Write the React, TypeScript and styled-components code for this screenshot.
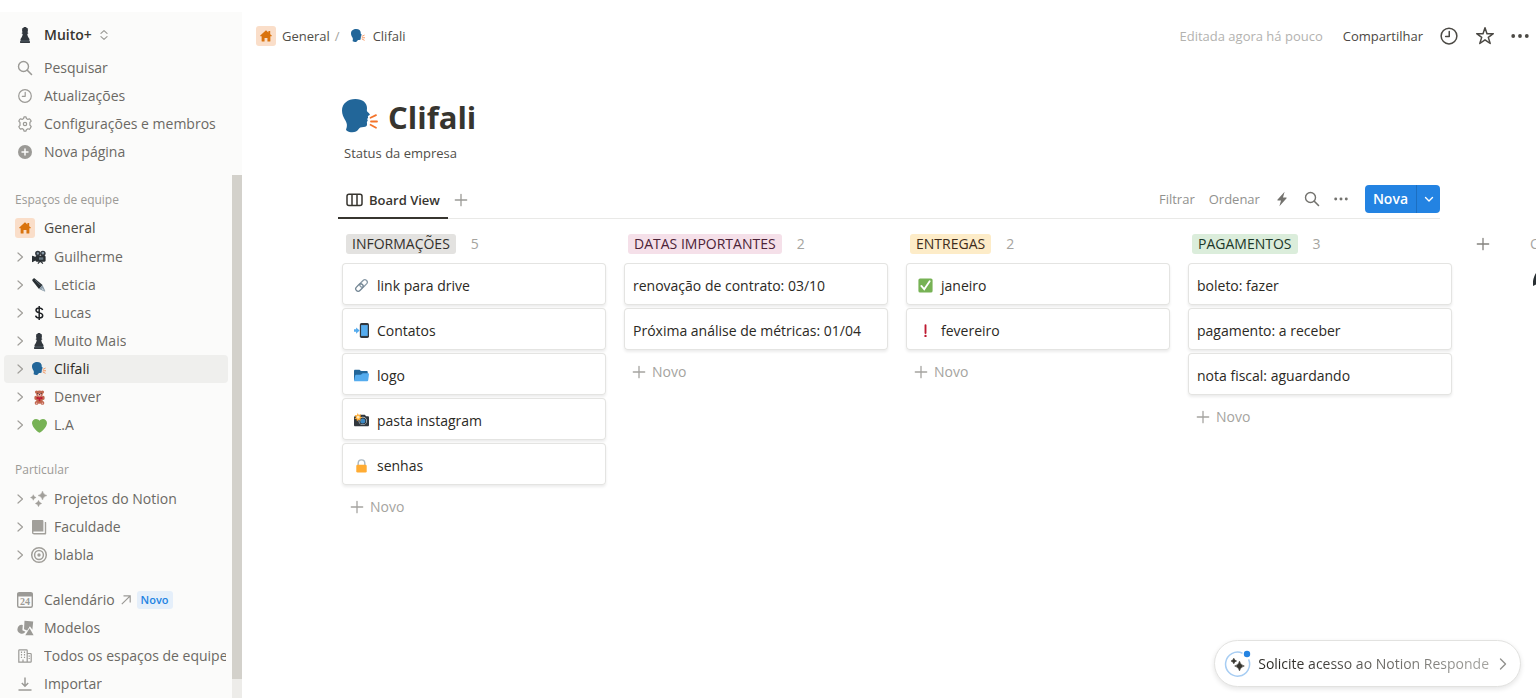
import React from "react";
import styled, { createGlobalStyle, css } from "styled-components";

const GlobalStyle = createGlobalStyle`
  *, *::before, *::after { box-sizing: border-box; }
  body {
    margin: 0;
    background: #ffffff;
    color: #37352f;
    font-family: "Open Sans", "Noto Sans", "Segoe UI", sans-serif;
    font-size: 14px;
    line-height: 20px;
  }
  h1, p, ul, h2 { margin: 0; padding: 0; font-weight: inherit; font-size: inherit; }
  ul { list-style: none; }
  a { color: inherit; text-decoration: none; }
  button { border: 0; padding: 0; margin: 0; background: none; font: inherit; color: inherit; cursor: pointer; }
  svg { display: block; flex: none; }
`;

/* ---------- emoji ---------- */

type IconProps = { size?: number };

const SpeakingHead = ({ size = 14 }: IconProps) => (
  <svg width={size} height={size} viewBox="0 1.5 36 36" aria-hidden="true">
    <path
      fill="#226699"
      d="M13.400 1.500C20.600 1.500 25 5.400 25 10.600c0 1.600-.4 2.400.2 3.400.7 1.100 2.700 2.200 2.700 3.100 0 .8-1.500 1-1.900 1.400-.4.500.2 1.200.1 1.800-.1.500-.9.800-.9 1.200 0 .5.600.9.500 1.500-.1.700-.7.900-.8 1.600-.1 1.200.6 2.600-.4 3.900-1.200 1.500-4.500.9-6.200 1.400-1.500.5-1.900 3-4.300 4.200-2.500 1.200-6.500 1-9.200-.9-1.300-1-.6-1.700-.2-3 .7-2.400.3-4.400-.9-6.700C1.400 19.400 0 16.800 0 13 0 6 5.800 1.500 13.400 1.500z"
    />
    <path d="M28.500 20.200l5.500-2.600M29 24h6M28.500 27.300l5.500 2.900" stroke="#F4742B" strokeWidth="1.800" strokeLinecap="round" fill="none" />
  </svg>
);

const Pawn = () => (
  <svg width="16" height="16" viewBox="0 0 36 36" aria-hidden="true">
    <path
      fill="#31373D"
      d="M14 2.500C14 1 16 0 18 0s4 1 4 2.500l2.500.9c.8.400.8 1.600 0 2l-.7.500c.8 1.200 1.100 2.500.6 3.900l-1 1.900 1.600 1c.8.800.5 2-.6 2.300l-1.300.4c.3 4 1.400 6.800 3.400 9.300 1 1.200 1.700 2.100 1.700 3.500 0 1-.5 1.600-.9 2 1.200.7 1.700 1.700 1.700 3V36H7v-2.800c0-1.300.5-2.300 1.700-3-.4-.4-.9-1-.9-2 0-1.400.7-2.300 1.700-3.500 2-2.500 3.100-5.300 3.400-9.300l-1.300-.4c-1.100-.3-1.400-1.500-.6-2.300l1.600-1-1-1.900c-.5-1.400-.2-2.700.6-3.900l-.7-.5c-.8-.4-.8-1.600 0-2z"
    />
    <path d="M8 31.500h20" stroke="#66757F" strokeWidth="1.500" />
  </svg>
);

const House = () => (
  <svg width="12" height="12" viewBox="0 0 14 14" aria-hidden="true">
    <path fill="#D9730D" d="M7 .4L.3 6.500c-.3.400 0 .9.400.9h1.200v5.300c0 .4.300.7.600.7h2.800V9.300h3.400v4.100h2.800c.3 0 .6-.3.600-.7V7.400h1.200c.4 0 .7-.5.400-.9L11.900 4.900V1.200H9.800V3z" />
  </svg>
);

const MovieCamera = () => (
  <svg width="14" height="14" viewBox="0 0 36 36" aria-hidden="true">
    <circle cx="15" cy="9" r="7" fill="#31373D" />
    <circle cx="28" cy="9" r="7" fill="#31373D" />
    <circle cx="15" cy="9" r="3" fill="#8899A6" />
    <circle cx="28" cy="8" r="3.500" fill="#8899A6" />
    <path fill="#292F33" d="M12 15h20c2 0 3 1 3 3v9c0 2-1 3-3 3H12c-2 0-3-1-3-3l-7 4c-1 .6-2 0-2-1V16c0-1 1-1.600 2-1l7 3c0-2 1-3 3-3z" />
    <path fill="#66757F" d="M18 19h11v6H18z" />
    <path d="M15 35l5-5h3l5 5" fill="none" stroke="#292F33" strokeWidth="3" />
  </svg>
);

const Pen = () => (
  <svg width="14" height="14" viewBox="0 0 36 36" aria-hidden="true">
    <path fill="#292F33" d="M1 7c-1-3 3-7 6-6l20 17-9 10z" />
    <path d="M8 5l14 14" stroke="#66757F" strokeWidth="2" />
    <path fill="#8899A6" d="M27 18l7 15c.6 1.400-.5 2-1.500 1.500L18 28z" />
    <path fill="#CCD6DD" d="M26 26l8 9-10-7z" />
  </svg>
);

const Dollar = () => (
  <svg width="16" height="16" viewBox="0 0 16 16" aria-hidden="true">
    <path d="M8.200 1v14M11.600 5C11.200 3.600 10 3 8.200 3 6.200 3 5 4 5 5.300c0 3.400 6.700 1.800 6.700 5.200 0 1.500-1.400 2.500-3.400 2.500-2 0-3.400-.8-3.700-2.400" fill="none" stroke="#1f2225" strokeWidth="1.500" />
  </svg>
);

const Bear = () => (
  <svg width="15" height="15" viewBox="0 0 36 36" aria-hidden="true">
    <g fill="#C1694F">
      <circle cx="11" cy="5" r="4" />
      <circle cx="25" cy="5" r="4" />
      <ellipse cx="18" cy="9" rx="8" ry="8" />
      <ellipse cx="18" cy="23" rx="8" ry="10" />
      <ellipse cx="9" cy="19" rx="3.500" ry="5" />
      <ellipse cx="27" cy="19" rx="3.500" ry="5" />
      <ellipse cx="11" cy="31" rx="4.500" ry="4.500" />
      <ellipse cx="25" cy="31" rx="4.500" ry="4.500" />
    </g>
    <ellipse cx="18" cy="12" rx="4.500" ry="3.500" fill="#E6AAAA" />
    <circle cx="14" cy="8" r="1.300" fill="#292F33" />
    <circle cx="22" cy="8" r="1.300" fill="#292F33" />
    <circle cx="18" cy="11" r="1.500" fill="#292F33" />
    <path fill="#BE1931" d="M11 16l7 2 7-2v6l-5-1v6h-4v-6l-5 1z" />
    <circle cx="11" cy="32" r="2" fill="#E6AAAA" />
    <circle cx="25" cy="32" r="2" fill="#E6AAAA" />
  </svg>
);

const Heart = () => (
  <svg width="15" height="15" viewBox="0 0 36 36" aria-hidden="true">
    <path fill="#77B255" d="M36 11.800c0-5.300-4.300-9.700-9.700-9.700-3.400 0-6.500 1.800-8.300 4.600-1.700-2.800-4.800-4.600-8.300-4.600C4.300 2.100 0 6.500 0 11.800c0 .8.100 1.500.3 2.200C1.800 23.400 12.200 33.200 18 35.300c5.800-2.100 16.200-11.900 17.700-21.300.2-.7.300-1.400.3-2.200z" />
  </svg>
);

const Link = () => (
  <svg width="15" height="15" viewBox="0 0 16 16" fill="none" aria-hidden="true">
    <g transform="rotate(-45 8 8)" strokeWidth="1.400">
      <rect x="6.600" y="5.400" width="9" height="5.200" rx="2.600" stroke="#8899A6" />
      <rect x=".4" y="5.400" width="9" height="5.200" rx="2.600" stroke="#738694" />
    </g>
  </svg>
);

const Phone = () => (
  <svg width="15" height="15" viewBox="0 0 36 36" aria-hidden="true">
    <rect x="14" y="0" width="22" height="36" rx="4" fill="#31373D" />
    <rect x="17" y="5" width="16" height="26" fill="#55ACEE" />
    <path fill="#55ACEE" d="M0 15h5v-4.500l8.500 7.500L5 25.500V21H0z" />
  </svg>
);

const Folder = () => (
  <svg width="15" height="15" viewBox="0 0 36 36" aria-hidden="true">
    <path fill="#269" d="M0 29V7c0-2 1-3 3-3h10c2 0 2 3 5 3h12c2 0 3 1 3 3v19z" />
    <path fill="#55ACEE" d="M36 15c0-1.500-1-2.500-2.500-2.500H22c-4 0-3 3.500-6.500 3.500H6c-2 0-3 1-3.300 2.500L0 31c0 .6.500 1 1.500 1h30c1.500 0 2.400-1 2.600-2.500z" />
  </svg>
);

const Camera = () => (
  <svg width="15" height="15" viewBox="0 0 36 36" aria-hidden="true">
    <path fill="#31373D" d="M3 8h8l3-4h12l3 4h4c2 0 3 1 3 3v18c0 2-1 3-3 3H3c-2 0-3-1-3-3V11c0-2 1-3 3-3z" />
    <circle cx="21" cy="19" r="10" fill="#CCD6DD" />
    <circle cx="21" cy="19" r="8.500" fill="#31373D" />
    <circle cx="21" cy="19" r="6" fill="#3B88C3" />
    <path fill="#FFAC33" d="M9 0l2.500 4.500L17 3l-1.800 5.200L20 11l-5 2 1 5.500-5-2.500-4 4-.8-5.500L1 14l4-4-3.500-5L7 5.500z" />
    <circle cx="10" cy="10" r="3.500" fill="#FFE8B6" />
  </svg>
);

const Lock = () => (
  <svg width="15" height="15" viewBox="0 0 36 36" aria-hidden="true">
    <path d="M10 18v-5c0-5 3.500-8.500 8-8.500s8 3.500 8 8.500v5" fill="none" stroke="#AAB8C2" strokeWidth="3.500" />
    <rect x="5.500" y="16" width="25" height="19" rx="3" fill="#FFAC33" />
  </svg>
);

const Check = () => (
  <svg width="15" height="15" viewBox="0 0 36 36" aria-hidden="true">
    <rect x="1" y="1" width="34" height="34" rx="4" fill="#77B255" />
    <path d="M8 19l7 8L28 8" fill="none" stroke="#fff" strokeWidth="4.500" strokeLinecap="round" />
  </svg>
);

const Exclamation = () => (
  <svg width="15" height="15" viewBox="0 0 36 36" aria-hidden="true">
    <path d="M18 5v19" stroke="#BE1931" strokeWidth="4.500" strokeLinecap="round" />
    <circle cx="18" cy="31" r="2.800" fill="#BE1931" />
  </svg>
);

const Rocket = () => (
  <svg width="16" height="18" viewBox="0 0 16 18" aria-hidden="true">
    <path fill="#292F33" d="M8 0C4 1 1 6 0 12v5l4-2h8l4 2v-5C15 6 12 1 8 0z" />
  </svg>
);

/* ---------- interface icons ---------- */

const Search = () => (
  <svg width="16" height="16" viewBox="0 0 16 16" fill="none" stroke="currentColor" strokeLinecap="round" aria-hidden="true">
    <circle cx="6.500" cy="6.500" r="5" strokeWidth="1.400" />
    <path d="M10.300 10.300l4.200 4.200" strokeWidth="1.600" />
  </svg>
);

const Clock = ({ size = 16 }: IconProps) => (
  <svg width={size} height={size} viewBox="0 0 16 16" fill="none" stroke="currentColor" strokeWidth="1.200" aria-hidden="true">
    <circle cx="8" cy="8" r="6.300" />
    <path d="M8.200 4.300v4H5.300" strokeLinecap="round" strokeLinejoin="round" />
  </svg>
);

const Gear = () => (
  <svg width="16" height="16" viewBox="0 0 16 16" fill="none" stroke="currentColor" strokeWidth="1.200" strokeLinejoin="round" aria-hidden="true">
    <path d="M6.600 2.500L7 .9h2l.4 1.600 1.500.9 1.600-.6 1.200 1.400.5 1-1.300 1.300v2.700l1.300 1.300-1 1.900-.8.900-1.500-.5-1.500.9L9 15.100H7l-.4-1.600-1.500-.9-1.600.6-1-1.100-.7-1.500 1.200-1.200V6.500L1.800 5.200l.8-1.600.9-.8 1.600.6z" />
    <circle cx="8" cy="8" r="1.700" />
  </svg>
);

const PlusCircle = () => (
  <svg width="16" height="16" viewBox="0 0 16 16" aria-hidden="true">
    <circle cx="8" cy="8" r="7" fill="currentColor" />
    <path d="M8 5v6M5 8h6" stroke="#fbfbfa" strokeWidth="1.500" strokeLinecap="round" />
  </svg>
);

const UpDown = () => (
  <svg width="8" height="12" viewBox="0 0 10 14" fill="none" stroke="currentColor" strokeWidth="1.500" strokeLinecap="round" strokeLinejoin="round" aria-hidden="true">
    <path d="M1.200 5L5 1.500 8.800 5M1.200 9L5 12.500 8.800 9" />
  </svg>
);

const Chevron = () => (
  <svg width="12" height="12" viewBox="0 0 12 12" fill="none" stroke="currentColor" strokeWidth="1.200" strokeLinecap="round" strokeLinejoin="round" aria-hidden="true">
    <path d="M4 2l4.500 4L4 10" />
  </svg>
);

const ChevronLarge = () => (
  <svg width="12" height="14" viewBox="0 0 12 14" fill="none" stroke="currentColor" strokeWidth="1.400" strokeLinecap="round" strokeLinejoin="round" aria-hidden="true">
    <path d="M3.500 2l5 5-5 5" />
  </svg>
);

const ChevronDown = () => (
  <svg width="10" height="10" viewBox="0 0 10 10" fill="none" stroke="currentColor" strokeWidth="1.400" strokeLinecap="round" strokeLinejoin="round" aria-hidden="true">
    <path d="M1.500 3.500L5 7l3.500-3.500" />
  </svg>
);

const Plus = () => (
  <svg width="14" height="14" viewBox="0 0 14 14" stroke="currentColor" strokeWidth="1.300" strokeLinecap="round" aria-hidden="true">
    <path d="M7 1.300v11.400M1.300 7h11.400" />
  </svg>
);

const Dots = ({ size = 18 }: IconProps) => (
  <svg width={size} height={size} viewBox="0 0 18 18" fill="currentColor" aria-hidden="true">
    <circle cx="2.200" cy="9" r="1.900" />
    <circle cx="9" cy="9" r="1.900" />
    <circle cx="15.800" cy="9" r="1.900" />
  </svg>
);

const Star = () => (
  <svg width="20" height="20" viewBox="0 0 20 20" fill="none" stroke="currentColor" strokeWidth="1.500" strokeLinejoin="round" aria-hidden="true">
    <path d="M10 1.800l2 5.900h6.300l-5 3.700 1.900 6.100-5.200-3.700-5.200 3.700 1.900-6.100-5-3.700H8z" />
  </svg>
);

const Bolt = () => (
  <svg width="16" height="16" viewBox="0 0 16 16" fill="currentColor" aria-hidden="true">
    <path d="M10.600.8L3.400 8.800c-.2.300 0 .6.300.6h3.300L5.400 15.200l7.200-8c.2-.3 0-.6-.3-.6H9z" />
  </svg>
);

const BoardIcon = () => (
  <svg width="17" height="16" viewBox="0 0 17 16" fill="none" stroke="currentColor" strokeWidth="1.500" aria-hidden="true">
    <rect x="1" y="2.200" width="15" height="11.400" rx="2" />
    <path d="M6 2.200v11.400M11 2.200v11.400" />
  </svg>
);

const sparkle = (x: number, y: number, r: number) =>
  `M${x} ${y - r}Q${x + r * 0.18} ${y - r * 0.18} ${x + r} ${y}Q${x + r * 0.18} ${y + r * 0.18} ${x} ${y + r}Q${x - r * 0.18} ${y + r * 0.18} ${x - r} ${y}Q${x - r * 0.18} ${y - r * 0.18} ${x} ${y - r}z`;

const Sparkles = () => (
  <svg width="18" height="18" viewBox="0 0 18 18" fill="currentColor" stroke="currentColor" strokeWidth=".4" aria-hidden="true">
    <path d={sparkle(12.500, 5.500, 4.500) + sparkle(3.300, 7.500, 2.800) + sparkle(8.500, 13.500, 3.200)} />
  </svg>
);

const Book = () => (
  <svg width="18" height="18" viewBox="0 0 18 18" aria-hidden="true">
    <path fill="currentColor" d="M3 2h9.500c.5 0 .9.400.9.900v10.700H4.200c-.6 0-1.100.300-1.100.7 0 .3.500.600 1.100.600h10.600V4h.9c.4 0 .5.300.5.600v11c0 .5-.3.900-.8.900H4.300C2.800 16.500 2 15.500 2 14.200V3c0-.6.400-1 1-1z" />
  </svg>
);

const Target = () => (
  <svg width="18" height="18" viewBox="0 0 18 18" fill="none" stroke="currentColor" strokeWidth="1.500" aria-hidden="true">
    <circle cx="9" cy="9" r="7.300" />
    <circle cx="9" cy="9" r="4.400" />
    <circle cx="9" cy="9" r="1.700" fill="currentColor" stroke="none" />
  </svg>
);

const Calendar = () => (
  <svg width="18" height="18" viewBox="0 0 18 18" aria-hidden="true">
    <rect x="1.700" y="1.700" width="14.600" height="14.600" rx="1.500" fill="none" stroke="currentColor" strokeWidth="1.400" />
    <path d="M1.500 2h15v3.600h-15z" fill="currentColor" />
    <text x="9" y="14.200" textAnchor="middle" fontFamily="Liberation Serif, serif" fontSize="10" fontWeight="700" fill="currentColor">24</text>
  </svg>
);

const Shapes = () => (
  <svg width="18" height="18" viewBox="0 0 18 18" fill="currentColor" aria-hidden="true">
    <path d="M8.500 1.800l8.700.7-.8 8.300-2.500-3.600-2.700 4.200-3.200-1.200z" />
    <path d="M6.800 6a4.400 4.400 0 1 0 2.700 6.800l-3.100-1.500z" />
    <path d="M13.600 9.300l4 6.900H9.300z" />
  </svg>
);

const Building = () => (
  <svg width="16" height="16" viewBox="0 0 16 16" fill="none" stroke="currentColor" strokeWidth="1.200" aria-hidden="true">
    <path d="M1.800 14.200V2.600c0-.5.300-.8.800-.8h6.800c.5 0 .8.300.8.800v11.600zM10.200 5.500h3.200c.5 0 .8.300.8.800v7.100c0 .5-.3.800-.8.800h-3.200M6 14v-2.500" />
    <path d="M4.500 3.500v7M7.500 3.500v7" strokeDasharray="1.400 1.200" />
    <path d="M12.200 7.500v4.500" strokeDasharray="1.200 1.200" />
  </svg>
);

const Download = () => (
  <svg width="16" height="16" viewBox="0 0 16 16" fill="none" stroke="currentColor" strokeWidth="1.500" aria-hidden="true">
    <path d="M8 1.500v8.500M4.800 7L8 10.200 11.200 7" />
    <path d="M1.500 14h13" strokeWidth="1.700" />
  </svg>
);

const ArrowOut = () => (
  <svg width="10" height="10" viewBox="0 0 10 10" fill="none" stroke="currentColor" strokeWidth="1.200" aria-hidden="true">
    <path d="M.8 9.200l8.400-8.400M2.500.8h6.700v6.700" />
  </svg>
);

/* ---------- sidebar ---------- */

const Shell = styled.div`
  display: flex;
  height: 100vh;
  padding-top: 12px;
  overflow: hidden;
`;

const Sidebar = styled.nav`
  flex: none;
  display: flex;
  flex-direction: column;
  width: 242px;
  padding-top: 6px;
  background: #fbfbfa;
  color: #6b6964;
  overflow: hidden;
`;

const SidebarScroll = styled.div`
  flex: 1;
  display: flex;
  min-height: 0;
  margin-top: 9px;
`;

const SidebarList = styled.div`
  flex: 1;
  min-width: 0;
  overflow: hidden;
  padding-top: 11px;
`;

const ScrollRail = styled.div`
  flex: none;
  width: 10px;
  background: #edece9;
`;

const ScrollThumb = styled.div`
  height: 504px;
  max-height: 100%;
  background: #d3d1cb;
`;

const Workspace = styled.button`
  flex: none;
  display: flex;
  align-items: center;
  gap: 8px;
  height: 34px;
  margin: 0 4px 2px;
  padding: 0 10px;
  color: #37352f;
  font-weight: 600;
`;

const rowStyle = css`
  display: flex;
  align-items: center;
  height: 28px;
  margin: 0 4px;
  padding: 0 2px 0 10px;
  border-radius: 4px;
  font-weight: 500;
  white-space: nowrap;
  overflow: hidden;
`;

const NavRow = styled.a<{ $strong?: boolean }>`
  ${rowStyle}
  gap: 8px;
  color: ${(p) => (p.$strong ? "#4b4944" : "#6b6964")};
`;

const PageRow = styled.a<{ $active?: boolean }>`
  ${rowStyle}
  gap: 6px;
  background: ${(p) => (p.$active ? "#efefed" : "transparent")};
  color: ${(p) => (p.$active ? "#2b2924" : "#6b6964")};
`;

const IconSlot = styled.span`
  flex: none;
  display: flex;
  align-items: center;
  justify-content: center;
  width: 22px;
  color: #9b9a96;
`;

const PageIcons = styled.span`
  flex: none;
  display: grid;
  grid-template-columns: 12px 18px;
  gap: 4px;
  place-items: center;
  color: #a19f9a;
`;

const RowText = styled.span`
  display: flex;
  align-items: center;
  gap: 6px;
  overflow: hidden;
`;

const Muted = styled.span`
  display: flex;
  color: #9b9a96;
`;

const HomeBadge = styled.span`
  display: flex;
  align-items: center;
  justify-content: center;
  width: 20px;
  height: 20px;
  border-radius: 3px;
  background: #fadec9;
`;

const SectionLabel = styled.h2`
  height: 28px;
  padding-left: 15px;
  font-size: 12px;
  font-weight: 500;
  line-height: 28px;
  color: #9b9a96;
`;

const Group = styled.div`
  margin-bottom: 17px;
`;

const PageList = styled.ul`
  padding-top: 1px;
`;

const NewBadge = styled.span`
  padding: 0 4px;
  border-radius: 3px;
  background: #e5effa;
  color: #2383e2;
  font-size: 11px;
  font-weight: 600;
  line-height: 18px;
`;

/* ---------- page ---------- */

const Main = styled.main`
  flex: 1;
  min-width: 0;
  overflow: hidden;
`;

const TopBar = styled.header`
  display: flex;
  align-items: center;
  justify-content: space-between;
  height: 48px;
  padding: 0 7px 0 14px;
  font-size: 13px;
`;

const Crumbs = styled.div`
  display: flex;
  align-items: center;
  gap: 5px;
`;

const Crumb = styled.a`
  display: flex;
  align-items: center;
  gap: 6px;
  color: #504e49;
`;

const PageCrumb = styled(Crumb)`
  gap: 8px;
  margin-left: 6px;
`;

const Slash = styled.span`
  color: #a5a4a0;
`;

const TopActions = styled.div`
  display: flex;
  align-items: center;
  gap: 16px;
  color: #4b4944;
`;

const Edited = styled.span`
  margin-right: 4px;
  color: #b3b2af;
`;

const Content = styled.div`
  padding: 36px 96px 0;
`;

const TitleRow = styled.div`
  display: flex;
  align-items: center;
  gap: 10px;
  height: 42px;
  padding-left: 4px;
`;

const Title = styled.h1`
  font-size: 31px;
  font-weight: 700;
  line-height: 42px;
`;

const Description = styled.p`
  margin-top: 3px;
  padding-left: 6px;
  font-size: 13px;
  line-height: 24px;
  color: #504e49;
`;

const ViewBar = styled.div`
  display: flex;
  justify-content: space-between;
  height: 38px;
  margin-top: 16px;
  border-bottom: 1px solid #e9e9e7;
  font-size: 13px;
`;

const Tabs = styled.div`
  display: flex;
  align-items: center;
  gap: 6px;
  color: #9b9a96;
`;

const Tab = styled.button`
  display: flex;
  align-items: center;
  gap: 6px;
  height: 38px;
  padding: 2px 8px 0;
  border-bottom: 2px solid #37352f;
  color: #37352f;
  font-weight: 600;
`;

const Tools = styled.div`
  display: flex;
  align-items: center;
  gap: 14px;
  padding-bottom: 2px;
  color: #73726e;
`;

const TextTool = styled.button`
  color: #91918e;
`;

const SplitButton = styled.div`
  display: flex;
  height: 28px;
  margin-left: 3px;
  border-radius: 4px;
  background: #2383e2;
  color: #ffffff;
`;

const NewButton = styled.button`
  padding: 0 8px;
  font-size: 14px;
  font-weight: 600;
`;

const NewMenuButton = styled.button`
  display: flex;
  align-items: center;
  justify-content: center;
  width: 24px;
  border-left: 1px solid #1c6fc1;
`;

const Board = styled.div`
  display: flex;
  gap: 18px;
  margin-right: -96px;
  padding: 6px 0 8px 4px;
  overflow: hidden;
`;

const Column = styled.section`
  flex: none;
  width: 264px;
`;

const ColumnHead = styled.div`
  display: flex;
  align-items: center;
  gap: 15px;
  height: 38px;
  padding-left: 4px;
`;

const Tag = styled.h2<{ $bg: string; $fg: string }>`
  padding: 0 6px;
  border-radius: 3px;
  background: ${(p) => p.$bg};
  color: ${(p) => p.$fg};
  font-weight: 500;
  line-height: 20px;
`;

const Count = styled.span`
  color: #a5a4a0;
`;

const Cards = styled.ul`
  display: grid;
  gap: 3px;
`;

const Card = styled.a`
  display: flex;
  align-items: center;
  gap: 8px;
  height: 42px;
  padding: 3px 9px 0;
  border-radius: 4px;
  box-shadow: inset 0 0 0 1px #e4e4e2, 0 2px 3px #0f0f0f14;
  color: #2b2924;
  font-weight: 500;
`;

const CardIcon = styled.span`
  display: flex;
  padding-left: 3px;
`;

const AddCard = styled.button`
  display: flex;
  align-items: center;
  gap: 6px;
  height: 42px;
  padding: 2px 8px 0;
  color: #a5a4a0;
`;

const AddColumn = styled.button`
  flex: none;
  display: flex;
  align-items: center;
  height: 38px;
  margin: 0 22px 0 6px;
  color: #84827e;
`;

const HiddenGroups = styled.section`
  flex: none;
  display: grid;
  align-content: start;
  color: #a5a4a0;
  line-height: 38px;
`;

const HiddenGroup = styled.a`
  display: flex;
  align-items: center;
  height: 30px;
  padding-left: 3px;
`;

const Assistant = styled.button`
  position: fixed;
  right: 15px;
  bottom: 11px;
  display: flex;
  align-items: center;
  gap: 6px;
  height: 47px;
  padding: 0 11px 0 9px;
  border: 1px solid #e2e2e0;
  border-radius: 24px;
  background: #ffffff;
  box-shadow: 0 2px 5px #0f0f0f1c;
  color: #91918e;
  font-weight: 500;
`;

const FadeText = styled.span`
  margin-right: 2px;
  background: linear-gradient(90deg, #2b2924 10%, #a5a4a0 100%);
  background-clip: text;
  color: transparent;
`;

const AssistantIcon = () => (
  <svg width="28" height="28" viewBox="0 0 28 28" aria-hidden="true">
    <path d="M18.500 3.200A12 12 0 1 0 24.600 9.400" fill="none" stroke="#a7cdf3" strokeWidth="1.500" />
    <circle cx="23" cy="4" r="3.200" fill="#2383e2" />
    <path d={sparkle(15.500, 16, 4.800) + sparkle(9.800, 11, 2.800)} fill="#37352f" stroke="#37352f" strokeWidth=".6" />
  </svg>
);

/* ---------- data ---------- */

const teamPages = [
  { name: "Guilherme", icon: <MovieCamera /> },
  { name: "Leticia", icon: <Pen /> },
  { name: "Lucas", icon: <Dollar /> },
  { name: "Muito Mais", icon: <Pawn /> },
  { name: "Clifali", icon: <SpeakingHead />, active: true },
  { name: "Denver", icon: <Bear /> },
  { name: "L.A", icon: <Heart /> },
];

const privatePages = [
  { name: "Projetos do Notion", icon: <Sparkles /> },
  { name: "Faculdade", icon: <Book /> },
  { name: "blabla", icon: <Target /> },
];

type CardData = { text: string; icon?: React.ReactNode };

const columns: { name: string; bg: string; fg: string; cards: CardData[] }[] = [
  {
    name: "INFORMAÇÕES", bg: "#e3e2e0", fg: "#32302c",
    cards: [
      { text: "link para drive", icon: <Link /> },
      { text: "Contatos", icon: <Phone /> },
      { text: "logo", icon: <Folder /> },
      { text: "pasta instagram", icon: <Camera /> },
      { text: "senhas", icon: <Lock /> },
    ],
  },
  {
    name: "DATAS IMPORTANTES", bg: "#f5e0e9", fg: "#4c2337",
    cards: [{ text: "renovação de contrato: 03/10" }, { text: "Próxima análise de métricas: 01/04" }],
  },
  {
    name: "ENTREGAS", bg: "#fdecc8", fg: "#402c1b",
    cards: [
      { text: "janeiro", icon: <Check /> },
      { text: "fevereiro", icon: <Exclamation /> },
    ],
  },
  {
    name: "PAGAMENTOS", bg: "#dbeddb", fg: "#1c3829",
    cards: [{ text: "boleto: fazer" }, { text: "pagamento: a receber" }, { text: "nota fiscal: aguardando" }],
  },
];

type PageData = { name: string; icon: React.ReactNode; active?: boolean };

const Pages = ({ pages }: { pages: PageData[] }) => (
  <PageList>
    {pages.map((p) => (
      <li key={p.name}>
        <PageRow href="#" $active={p.active}>
          <PageIcons>
            <Chevron />
            {p.icon}
          </PageIcons>
          <RowText>{p.name}</RowText>
        </PageRow>
      </li>
    ))}
  </PageList>
);

const NavLink = ({ name, icon, children }: { name: string; icon: React.ReactNode; children?: React.ReactNode }) => (
  <NavRow href="#">
    <IconSlot>{icon}</IconSlot>
    <RowText>
      {name}
      {children}
    </RowText>
  </NavRow>
);

export default function App() {
  return (
    <Shell>
      <GlobalStyle />
      <Sidebar>
        <Workspace>
          <IconSlot><Pawn /></IconSlot>
          <span>Muito+</span>
          <Muted><UpDown /></Muted>
        </Workspace>
        <NavLink name="Pesquisar" icon={<Search />} />
        <NavLink name="Atualizações" icon={<Clock />} />
        <NavLink name="Configurações e membros" icon={<Gear />} />
        <NavLink name="Nova página" icon={<PlusCircle />} />
        <SidebarScroll>
          <SidebarList>
            <Group>
              <SectionLabel>Espaços de equipe</SectionLabel>
              <NavRow href="#" $strong>
                <IconSlot><HomeBadge><House /></HomeBadge></IconSlot>
                <RowText>General</RowText>
              </NavRow>
              <Pages pages={teamPages} />
            </Group>
            <Group>
              <SectionLabel>Particular</SectionLabel>
              <Pages pages={privatePages} />
            </Group>
            <NavLink name="Calendário" icon={<Calendar />}>
              <Muted><ArrowOut /></Muted>
              <NewBadge>Novo</NewBadge>
            </NavLink>
            <NavLink name="Modelos" icon={<Shapes />} />
            <NavLink name="Todos os espaços de equipe" icon={<Building />} />
            <NavLink name="Importar" icon={<Download />} />
          </SidebarList>
          <ScrollRail><ScrollThumb /></ScrollRail>
        </SidebarScroll>
      </Sidebar>

      <Main>
        <TopBar>
          <Crumbs>
            <Crumb href="#"><HomeBadge><House /></HomeBadge>General</Crumb>
            <Slash>/</Slash>
            <PageCrumb href="#"><SpeakingHead />Clifali</PageCrumb>
          </Crumbs>
          <TopActions>
            <Edited>Editada agora há pouco</Edited>
            <button>Compartilhar</button>
            <button aria-label="Histórico"><Clock size={20} /></button>
            <button aria-label="Favoritar"><Star /></button>
            <button aria-label="Mais opções"><Dots /></button>
          </TopActions>
        </TopBar>

        <Content>
          <TitleRow>
            <SpeakingHead size={36} />
            <Title>Clifali</Title>
          </TitleRow>
          <Description>Status da empresa</Description>

          <ViewBar>
            <Tabs>
              <Tab><BoardIcon />Board View</Tab>
              <button aria-label="Adicionar visualização"><Plus /></button>
            </Tabs>
            <Tools>
              <TextTool>Filtrar</TextTool>
              <TextTool>Ordenar</TextTool>
              <button aria-label="Automações"><Bolt /></button>
              <button aria-label="Buscar"><Search /></button>
              <button aria-label="Mais"><Dots size={14} /></button>
              <SplitButton>
                <NewButton>Nova</NewButton>
                <NewMenuButton aria-label="Modelos de página"><ChevronDown /></NewMenuButton>
              </SplitButton>
            </Tools>
          </ViewBar>

          <Board>
            {columns.map((c) => (
              <Column key={c.name}>
                <ColumnHead>
                  <Tag $bg={c.bg} $fg={c.fg}>{c.name}</Tag>
                  <Count>{c.cards.length}</Count>
                </ColumnHead>
                <Cards>
                  {c.cards.map((card) => (
                    <li key={card.text}>
                      <Card href="#">
                        {card.icon && <CardIcon>{card.icon}</CardIcon>}
                        {card.text}
                      </Card>
                    </li>
                  ))}
                </Cards>
                <AddCard><Plus />Novo</AddCard>
              </Column>
            ))}
            <AddColumn aria-label="Adicionar grupo"><Plus /></AddColumn>
            <HiddenGroups>
              <span>Ocultos</span>
              <HiddenGroup href="#" aria-label="Grupo oculto"><Rocket /></HiddenGroup>
            </HiddenGroups>
          </Board>
        </Content>
      </Main>

      <Assistant>
        <AssistantIcon />
        <FadeText>Solicite acesso ao Notion Responde</FadeText>
        <ChevronLarge />
      </Assistant>
    </Shell>
  );
}
